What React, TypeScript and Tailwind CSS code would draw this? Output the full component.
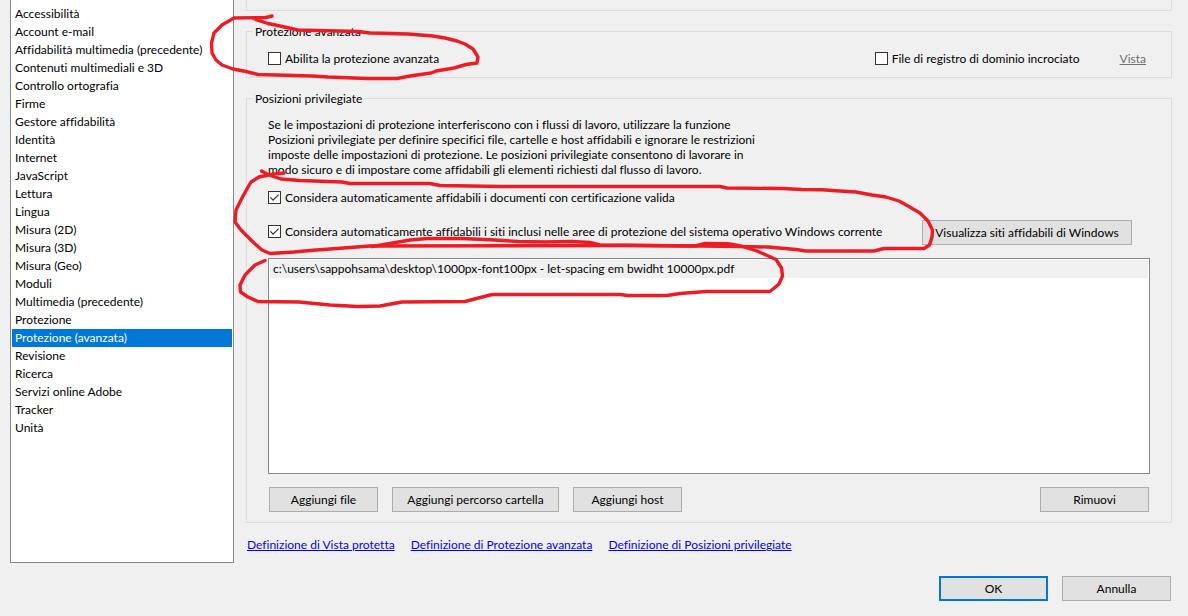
import { useState } from 'react';
import type { ReactNode } from 'react';
import clsx from 'clsx';

const CATEGORIES = [
  'Accessibilità',
  'Account e-mail',
  'Affidabilità multimedia (precedente)',
  'Contenuti multimediali e 3D',
  'Controllo ortografia',
  'Firme',
  'Gestore affidabilità',
  'Identità',
  'Internet',
  'JavaScript',
  'Lettura',
  'Lingua',
  'Misura (2D)',
  'Misura (3D)',
  'Misura (Geo)',
  'Moduli',
  'Multimedia (precedente)',
  'Protezione',
  'Protezione (avanzata)',
  'Revisione',
  'Ricerca',
  'Servizi online Adobe',
  'Tracker',
  'Unità',
];

const LINKS = [
  'Definizione di Vista protetta',
  'Definizione di Protezione avanzata',
  'Definizione di Posizioni privilegiate',
];

function CheckBox({ label, defaultChecked = false }: { label: string; defaultChecked?: boolean }) {
  return (
    <label className="flex h-[17px] items-center gap-1 whitespace-nowrap">
      <span className="grid size-[13px] shrink-0">
        <input
          type="checkbox"
          defaultChecked={defaultChecked}
          className="peer col-start-1 row-start-1 size-[13px] appearance-none border border-[#333333] bg-white"
        />
        <svg
          viewBox="0 0 13 13"
          className="pointer-events-none invisible col-start-1 row-start-1 size-[13px] peer-checked:visible"
          fill="none"
          stroke="#333333"
          strokeWidth="1.2"
        >
          <path d="M2.4 6.4 L5.1 9.2 L10.6 3.6" />
        </svg>
      </span>
      {label}
    </label>
  );
}

function Button({
  children,
  width = 'w-[109px]',
  primary = false,
}: {
  children: ReactNode;
  width?: string;
  primary?: boolean;
}) {
  return (
    <button
      type="button"
      className={clsx(
        'flex h-[25px] shrink-0 items-center justify-center whitespace-nowrap bg-[#e1e1e1]',
        width,
        primary ? 'border-2 border-[#0078d7]' : 'border border-[#adadad]',
      )}
    >
      {children}
    </button>
  );
}

function Group({ title, children }: { title: string; children: ReactNode }) {
  return (
    <fieldset className="mt-[11px] min-w-0 border border-[#dcdcdc]">
      <legend className="ml-[6px] px-[2px] pt-[2px] leading-4">{title}</legend>
      <div className="px-[21px] py-[10px]">{children}</div>
    </fieldset>
  );
}

function Annotations() {
  return (
    <svg
      className="pointer-events-none absolute top-0 left-0 h-[320px] w-[960px]"
      viewBox="0 0 960 320"
      fill="none"
      stroke="#ed1c24"
      strokeWidth="3.4"
      strokeLinecap="round"
      strokeLinejoin="round"
      aria-hidden="true"
    >
      <path d="M272 16 L266 17.5 L234 18 L222 25 L214 33 L211.500 43 L212 53 L216 60 L222 65 L233 69 L246 71.500 L258 74.500 L312 76 L328 77 L367 78.500 L397 78.500 L410 76 L431 73 L436 71 L454 68 L466 64.500 L477 63 L478 57 L473 49 L465 44 L457 41 L445 38 L433 36 L408 34 L370 33 L358 31.500 L298 30 L280 26 L268 23.500 L253 18.500" />
      <path d="M261.500 171 L269 175 L281 179 L300 180.500 L342 182 L350 183.500 L430 183.500 L440 185.500 L500 186.500 L720 186.500 L727 188 L783 188.500 L802 189.500 L822 189.700 L840 191 L856 192 L872 195 L886 197 L899 201 L908 206 L920 213 L928 221 L932.500 230 L932 237 L929.500 245 L924 248.500 L884 248.500 L874 251 L806 251 L796 249.500 L768 247 L740 246.500 L700 246 L630 245.500 L370 246 L350 247.500 L330 249 L310 250.500 L294 252 L270 253.500 L262 250 L254 243 L241 230 L235 222 L236 210 L242 198 L248 187 L251 182 L259 177 L271 174.500 L284 173" />
      <path d="M265 260.500 L255 265 L245 275 L240 285 L240.500 292 L248 297 L258 301.500 L299 302 L330 305 L358 306.500 L380 306 L402 302 L465 301.500 L492 294.500 L620 294.500 L628 295.500 L667 295.500 L680 293.500 L706 291.500 L770 291.500 L779 284 L782.500 276 L781.500 268 L776 259.500 L766 255 L757 251 L741 246 L728 243.800 L705 243.500 L695 246 L600 245 L590 242.500 L572 241.500 L545 242 L518 241.500 L495 240 L462 238.500 L427 238.500 L410 240 L390 243.500 L372 246.500" />
    </svg>
  );
}

export default function App() {
  const [selected, setSelected] = useState('Protezione (avanzata)');

  return (
    <div className="relative flex min-h-screen flex-col bg-[#f0f0f0] font-['Lato','Open_Sans',sans-serif] text-[12px] leading-[15px] text-black [font-variant-ligatures:none]">
      <div className="flex gap-3 pr-4 pl-[10px]">
        <nav className="w-56 shrink-0 border border-t-0 border-[#828790] bg-white px-px pt-[5px]">
          <ul>
            {CATEGORIES.map((name) => (
              <li key={name}>
                <button
                  type="button"
                  onClick={() => setSelected(name)}
                  className={clsx(
                    'block w-full pl-[3px] text-left leading-[18px] whitespace-nowrap',
                    name === selected && 'bg-[#0078d7] text-white',
                  )}
                >
                  {name}
                </button>
              </li>
            ))}
          </ul>
        </nav>

        <main className="min-w-0 flex-1 pb-[10px]">
          <div className="h-[11px] border border-t-0 border-[#dcdcdc]" />

          <Group title="Protezione avanzata">
            <div className="flex items-center">
              <CheckBox label="Abilita la protezione avanzata" />
              <div className="ml-auto flex items-center gap-10 pr-1">
                <CheckBox label="File di registro di dominio incrociato" />
                <a href="#vista" className="text-[#6d6d6d] underline">
                  Vista
                </a>
              </div>
            </div>
          </Group>

          <Group title="Posizioni privilegiate">
            <p className="whitespace-nowrap">
              Se le impostazioni di protezione interferiscono con i flussi di lavoro, utilizzare la funzione
              <br />
              Posizioni privilegiate per definire specifici file, cartelle e host affidabili e ignorare le restrizioni
              <br />
              imposte delle impostazioni di protezione. Le posizioni privilegiate consentono di lavorare in
              <br />
              modo sicuro e di impostare come affidabili gli elementi richiesti dal flusso di lavoro.
            </p>
            <div className="mt-3">
              <CheckBox defaultChecked label="Considera automaticamente affidabili i documenti con certificazione valida" />
            </div>
            <div className="mt-[14px] flex items-start justify-between pr-[18px]">
              <div className="pt-[3px]">
                <CheckBox
                  defaultChecked
                  label="Considera automaticamente affidabili i siti inclusi nelle aree di protezione del sistema operativo Windows corrente"
                />
              </div>
              <Button width="w-[210px]">Visualizza siti affidabili di Windows</Button>
            </div>
            <ul className="mt-[13px] h-[216px] border border-[#828790] bg-white p-px">
              <li className="bg-[#f0f0f0] pl-[3px] leading-[18px]">
                c:\users\sappohsama\desktop\1000px-font100px - let-spacing em bwidht 10000px.pdf
              </li>
            </ul>
            <div className="mt-[13px] flex gap-[14px] px-px">
              <Button>Aggiungi file</Button>
              <Button width="w-[167px]">Aggiungi percorso cartella</Button>
              <Button>Aggiungi host</Button>
              <div className="ml-auto">
                <Button>Rimuovi</Button>
              </div>
            </div>
          </Group>

          <div className="mt-[14px] flex gap-4 pl-px leading-4">
            {LINKS.map((text) => (
              <a key={text} href="#definizione" className="text-[#0000ff] underline">
                {text}
              </a>
            ))}
          </div>
        </main>
      </div>

      <footer className="mt-[13px] flex justify-end gap-[14px] pr-[17px]">
        <Button primary>OK</Button>
        <Button>Annulla</Button>
      </footer>

      <Annotations />
    </div>
  );
}
